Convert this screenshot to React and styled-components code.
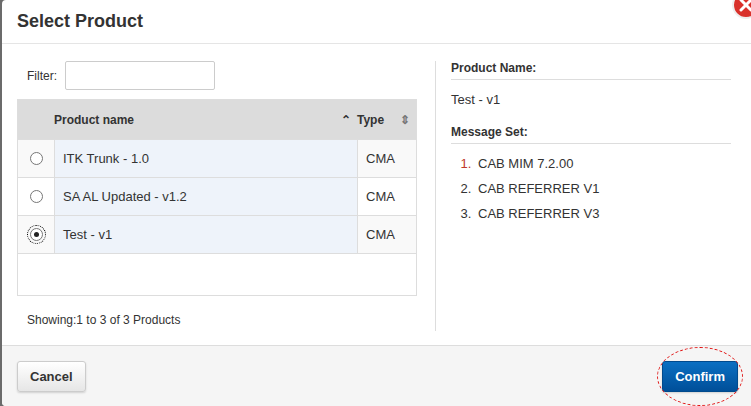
import styled, { createGlobalStyle } from 'styled-components'

const Global = createGlobalStyle`
  html, body { margin: 0; padding: 0; background: #6b6b6b; }
  body { font-family: "Liberation Sans", Arial, sans-serif; color: #333; }
`

const Dialog = styled.div`
  position: relative;
  margin-left: 2px;
  width: 749px;
  height: 406px;
  background: #fff;
  border-radius: 4px 0 0 4px;
  display: flex;
  flex-direction: column;
  overflow: hidden;
`

const Header = styled.div`
  height: 43px;
  border-bottom: 1px solid #e5e5e5;
  display: flex;
  align-items: center;
  padding-left: 15px;
  h1 { margin: 0; font-size: 18px; font-weight: bold; color: #333; }
`

const Close = styled.svg`
  position: absolute;
  top: -10px;
  right: -10px;
`

const Body = styled.div`
  flex: 1;
  display: flex;
  padding: 17px 20px 0 15px;
`

const Left = styled.div`
  width: 400px;
  border-right: 1px solid #ddd;
  padding-right: 18px;
  height: 270px;
`

const FilterRow = styled.div`
  display: flex;
  align-items: center;
  gap: 8px;
  padding-left: 10px;
  font-size: 12px;
  margin-bottom: 9px;
  input {
    width: 150px;
    height: 29px;
    box-sizing: border-box;
    border: 1px solid #ccc;
    border-radius: 2px;
  }
`

const Table = styled.div`
  border: 1px solid #ddd;
  height: 197px;
  box-sizing: border-box;
  font-size: 13px;
`

const Row = styled.div`
  display: grid;
  grid-template-columns: 36px 1fr 59px;
  height: ${p => (p.$head ? 39 : 37)}px;
  border-bottom: 1px solid #ddd;
  background: ${p => (p.$head ? '#dcdcdc' : '#fff')};
  font-weight: ${p => (p.$head ? 'bold' : 'normal')};
  font-size: ${p => (p.$head ? 12 : 13)}px;
  color: #333;
`

const Cell = styled.div`
  display: flex;
  align-items: center;
  padding-left: ${p => (p.$pad ? 8 : 0)}px;
  justify-content: ${p => (p.$center ? 'center' : 'space-between')};
  background: ${p => p.$bg || 'transparent'};
  border-left: ${p => (p.$line ? '1px solid #ddd' : 'none')};
  padding-right: ${p => (p.$right ? 6 : 0)}px;
`

const Radio = styled.span`
  width: 11px;
  height: 11px;
  border-radius: 50%;
  border: 1px solid #777;
  background: #fff;
  display: flex;
  align-items: center;
  justify-content: center;
  outline: ${p => (p.$on ? '1px dotted #000' : 'none')};
  outline-offset: 2px;
  &::after {
    content: '';
    width: 5px;
    height: 5px;
    border-radius: 50%;
    background: ${p => (p.$on ? '#222' : 'transparent')};
  }
`

const Showing = styled.div`
  font-size: 12px;
  padding: 17px 0 0 10px;
`

const Right = styled.div`
  flex: 1;
  padding-left: 15px;
  font-size: 13px;
`

const Label = styled.div`
  font-weight: bold;
  font-size: 12px;
  padding-bottom: 4px;
  border-bottom: 1px solid #ddd;
  margin-bottom: 12px;
`

const List = styled.ol`
  margin: 0;
  padding-left: 24px;
  li { margin-bottom: 10px; }
  li:first-child::marker { color: #c0392b; }
  li span { padding-left: 3px; }
`

const Footer = styled.div`
  height: 60px;
  background: #f5f5f5;
  border-top: 1px solid #ddd;
  display: flex;
  align-items: center;
  justify-content: space-between;
  padding: 0 8px 0 15px;
`

const Button = styled.button`
  font-family: inherit;
  font-size: 13px;
  font-weight: bold;
  height: 31px;
  padding: 0 12px;
  border-radius: 3px;
  border: 1px solid ${p => (p.$primary ? '#004a8d' : '#ccc')};
  color: ${p => (p.$primary ? '#fff' : '#333')};
  background: ${p => (p.$primary ? 'linear-gradient(#0a6fc2, #004f99)' : 'linear-gradient(#fff, #e6e6e6)')};
  box-shadow: 0 1px 2px rgba(0,0,0,0.15);
`

const Ring = styled.div`
  position: relative;
  padding: 14px 5px;
  &::before {
    content: '';
    position: absolute;
    inset: 0;
    border: 1px dashed #e01010;
    border-radius: 50%;
  }
`

const rows = [
  ['ITK Trunk - 1.0', false],
  ['SA AL Updated - v1.2', false],
  ['Test - v1', true],
]

export default function App() {
  return (
    <>
      <Global />
      <Dialog>
        <Header><h1>Select Product</h1></Header>
        <Body>
          <Left>
            <FilterRow>Filter: <input /></FilterRow>
            <Table>
              <Row $head>
                <Cell />
                <Cell $right>Product name <span>⌃</span></Cell>
                <Cell $right>Type <span style={{ color: '#777' }}>⇕</span></Cell>
              </Row>
              {rows.map(([name, on], i) => (
                <Row key={name}>
                  <Cell $center $bg={i % 2 === 0 ? '#f9f9f9' : '#fff'}><Radio $on={on} /></Cell>
                  <Cell $pad $line $bg="#eef3fa">{name}</Cell>
                  <Cell $pad $line $bg={i % 2 === 0 ? '#f9f9f9' : '#fff'}>CMA</Cell>
                </Row>
              ))}
            </Table>
            <Showing>Showing:1 to 3 of 3 Products</Showing>
          </Left>
          <Right>
            <Label>Product Name:</Label>
            <div style={{ marginBottom: 18 }}>Test - v1</div>
            <Label>Message Set:</Label>
            <List>
              <li><span>CAB MIM 7.2.00</span></li>
              <li><span>CAB REFERRER V1</span></li>
              <li><span>CAB REFERRER V3</span></li>
            </List>
          </Right>
        </Body>
        <Footer>
          <Button>Cancel</Button>
          <Ring><Button $primary>Confirm</Button></Ring>
        </Footer>
        <Close width="30" height="30" viewBox="0 0 30 30">
          <circle cx="15" cy="15" r="13" fill="#d9312b" stroke="#eee" strokeWidth="2" />
          <path d="M10 10 L20 20 M20 10 L10 20" stroke="#fff" strokeWidth="3" strokeLinecap="round" />
        </Close>
      </Dialog>
    </>
  )
}
